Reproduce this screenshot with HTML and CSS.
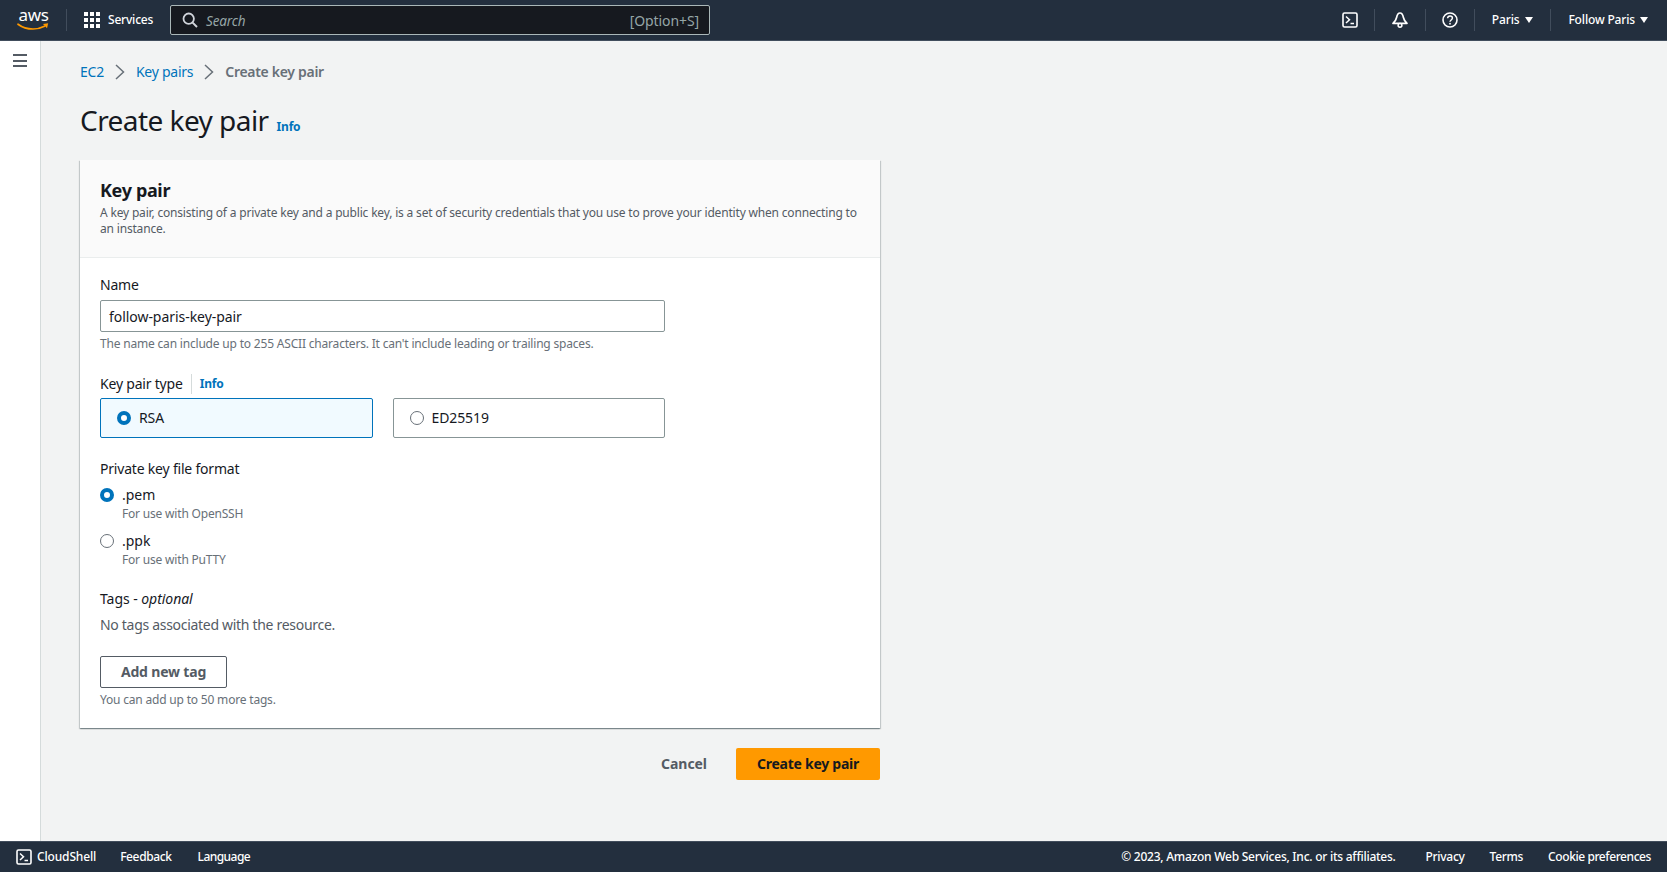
FILE: index.html
```html
<!DOCTYPE html>
<html lang="en">
<head>
<meta charset="utf-8">
<title>Create key pair</title>
<link rel="stylesheet" href="styles.css">
</head>
<body>
<header class="topbar">
  <div class="logo">
    <span class="logo-text">aws</span>
    <svg class="swoosh" width="33" height="9" viewBox="0 0 33 9"><path d="M1 1.200c4 3 9 4.800 15 4.800 4 0 8-1 11.500-2.800" fill="none" stroke="#f90" stroke-width="1.700" stroke-linecap="round"/><path d="M26 .9l5.200-.6-1.200 5z" fill="#f90"/></svg>
  </div>
  <span class="sep logo-sep"></span>
  <div class="services">
    <span class="grid-icon"><i></i><i></i><i></i><i></i><i></i><i></i><i></i><i></i><i></i></span>
    <span>Services</span>
  </div>
  <div class="search">
    <svg class="search-icon" width="16" height="16" viewBox="0 0 16 16"><circle cx="6.700" cy="6.700" r="5.200" fill="none" stroke="#d1d5db" stroke-width="1.800"/><path d="M10.600 10.600l4.400 4.400" stroke="#d1d5db" stroke-width="2" fill="none"/></svg>
    <span class="search-text">Search</span>
    <span class="search-key">[Option+S]</span>
  </div>
  <div class="top-right">
    <span class="top-icon first">
      <svg width="16" height="16" viewBox="0 0 16 16"><rect x="1" y="1" width="14" height="14" rx="1.500" fill="none" stroke="#fff" stroke-width="1.600"/><path d="M4 4.500L7.500 7.700 4 11M8.500 11.500H12" fill="none" stroke="#fff" stroke-width="1.500"/></svg>
    </span>
    <span class="sep"></span>
    <span class="top-icon second">
      <svg width="16" height="16" viewBox="0 0 16 16"><path d="M8 1C5.600 1 5 3.300 4.600 5.500 4.200 7.800 2.800 9.600 1 11.300h14c-1.800-1.700-3.200-3.500-3.600-5.800C11 3.300 10.400 1 8 1z" fill="none" stroke="#fff" stroke-width="1.700" stroke-linejoin="round"/><circle cx="8" cy="13.300" r="1.900" fill="#232f3e" stroke="#fff" stroke-width="1.500"/></svg>
    </span>
    <span class="sep"></span>
    <span class="top-icon third">
      <svg width="16" height="16" viewBox="0 0 16 16"><circle cx="8" cy="8" r="7" fill="none" stroke="#fff" stroke-width="1.600"/><path d="M5.600 6.200C5.700 4.800 6.700 4 8 4c1.400 0 2.400.9 2.400 2.100 0 1.900-2.400 1.900-2.400 3.700" fill="none" stroke="#fff" stroke-width="1.500"/><rect x="7.200" y="10.900" width="1.600" height="1.600" fill="#fff"/></svg>
    </span>
    <span class="sep"></span>
    <span class="menu region">Paris<i class="caret"></i></span>
    <span class="sep"></span>
    <span class="menu account">Follow Paris<i class="caret"></i></span>
  </div>
</header>

<div class="shell">
  <aside class="side">
    <span class="burger"><i></i><i></i><i></i></span>
  </aside>
  <main class="content">
    <nav class="crumbs">
      <a>EC2</a>
      <svg width="16" height="16" viewBox="0 0 16 16"><path d="M4 1l7.500 7L4 15" fill="none" stroke="#687078" stroke-width="1.500"/></svg>
      <a>Key pairs</a>
      <svg width="16" height="16" viewBox="0 0 16 16"><path d="M4 1l7.500 7L4 15" fill="none" stroke="#687078" stroke-width="1.500"/></svg>
      <span class="crumb-current">Create key pair</span>
    </nav>
    <div class="page-title">
      <h1>Create key pair</h1>
      <a class="info">Info</a>
    </div>
    <section class="card">
      <div class="card-head">
        <h2>Key pair</h2>
        <p>A key pair, consisting of a private key and a public key, is a set of security credentials that you use to prove your identity when connecting to an instance.</p>
      </div>
      <div class="card-body">
        <div class="label">Name</div>
        <div class="input">follow-paris-key-pair</div>
        <div class="hint hint-name">The name can include up to 255 ASCII characters. It can't include leading or trailing spaces.</div>

        <div class="label label-type"><span>Key pair type</span><a class="info info-inline">Info</a></div>
        <div class="tiles">
          <div class="tile tile-on"><span class="radio radio-on"></span>RSA</div>
          <div class="tile"><span class="radio"></span>ED25519</div>
        </div>

        <div class="label label-format">Private key file format</div>
        <div class="option">
          <span class="radio radio-on"></span>
          <div><div class="opt-title">.pem</div><div class="hint">For use with OpenSSH</div></div>
        </div>
        <div class="option option-next">
          <span class="radio"></span>
          <div><div class="opt-title">.ppk</div><div class="hint">For use with PuTTY</div></div>
        </div>

        <div class="label label-tags">Tags - <em>optional</em></div>
        <div class="no-tags">No tags associated with the resource.</div>
        <div class="btn-add">Add new tag</div>
        <div class="hint hint-tags">You can add up to 50 more tags.</div>
      </div>
    </section>
    <div class="actions">
      <span class="cancel">Cancel</span>
      <span class="primary">Create key pair</span>
    </div>
  </main>
</div>

<footer class="footer">
  <span class="foot-item cloudshell">
    <svg width="16" height="16" viewBox="0 0 16 16"><rect x="1" y="1" width="14" height="14" rx="1.500" fill="none" stroke="#fff" stroke-width="1.600"/><path d="M4 4.500L7.500 7.700 4 11M8.500 11.500H12" fill="none" stroke="#fff" stroke-width="1.500"/></svg>
    CloudShell
  </span>
  <span class="foot-item foot-tight">Feedback</span>
  <span class="foot-item foot-lang">Language</span>
  <span class="foot-right">
    <span class="foot-item foot-copy">© 2023, Amazon Web Services, Inc. or its affiliates.</span>
    <span class="foot-item">Privacy</span>
    <span class="foot-item">Terms</span>
    <span class="foot-item foot-cookie">Cookie preferences</span>
  </span>
</footer>
</body>
</html>
```

FILE: styles.css
```css
* { box-sizing: border-box; }
html, body { height: 100%; }
body {
  margin: 0;
  height: 872px;
  overflow: hidden;
  display: flex;
  flex-direction: column;
  background: #f2f3f3;
  color: #16191f;
  font-family: "Noto Sans", "Liberation Sans", sans-serif;
  font-size: 14px;
  line-height: 20px;
}
a { color: #0073bb; }

/* top bar */
.topbar {
  height: 41px;
  flex: none;
  display: flex;
  align-items: center;
  background: #232f3e;
  border-bottom: 1px solid #414d5c;
  color: #fff;
  font-size: 12px;
  font-weight: 500;
  padding-left: 17px;
}
.logo { width: 33px; display: flex; flex-direction: column; align-items: center; }
.logo-text { font-size: 17px; line-height: 14px; font-weight: 400; letter-spacing: -0.4px; }
.swoosh { display: block; margin-top: 1px; }
.sep { width: 1px; height: 22px; background: #414d5c; flex: none; }
.logo-sep { margin-left: 16px; margin-right: 17px; }
.services { display: flex; align-items: center; gap: 8px; width: 87px; letter-spacing: -0.2px; }
.grid-icon { display: grid; grid-template-columns: repeat(3, 4px); gap: 2px; width: 16px; }
.grid-icon i { width: 4px; height: 4px; background: #fff; }
.search {
  width: 540px;
  height: 30px;
  margin-left: -1px;
  display: flex;
  align-items: center;
  background: #16191f;
  border: 1px solid #aab7b8;
  border-radius: 2px;
  padding: 0 10px 0 11px;
  font-size: 14px;
  font-weight: 400;
  color: #95a5a6;
}
.search-icon { flex: none; }
.search-text { font-style: italic; margin: 1px 0 0 8px; font-size: 13.500px; letter-spacing: -0.15px; }
.search-key { margin: 1px 0 0 auto; letter-spacing: -0.1px; }
.top-right { margin-left: auto; display: flex; align-items: center; }
.top-icon { height: 22px; display: flex; align-items: center; justify-content: center; }
.top-icon.first { width: 48px; }
.top-icon.second { width: 50px; }
.top-icon.third { width: 48px; }
.menu { display: flex; align-items: center; gap: 6px; letter-spacing: -0.15px; }
.region { padding: 0 17px 0 17px; }
.account { padding: 0 19px 0 17px; gap: 5px; }
.caret { width: 0; height: 0; border-left: 4.500px solid transparent; border-right: 4.500px solid transparent; border-top: 6px solid #fff; }

/* shell */
.shell { flex: 1; display: flex; min-height: 0; }
.side {
  width: 41px;
  flex: none;
  background: #fff;
  border-right: 1px solid #d5dbdb;
  padding: 13px 0 0 13px;
}
.burger { display: flex; flex-direction: column; gap: 3.500px; width: 14px; }
.burger i { height: 2px; background: #545b64; }
.content { flex: 1; padding: 21px 0 0 39px; min-width: 0; }

.crumbs { display: flex; align-items: center; height: 20px; font-size: 14px; letter-spacing: -0.25px; }
.crumbs svg { margin: 0 8px 0 8px; flex: none; }
.crumb-current { color: #687078; font-weight: 600; letter-spacing: -0.3px; }
.page-title { display: flex; align-items: baseline; margin: 20px 0 0; height: 42px; }
h1 { margin: 0; font-size: 28px; line-height: 36px; font-weight: 400; letter-spacing: -0.55px; }
.info { font-size: 12px; font-weight: 700; margin-left: 8px; letter-spacing: -0.2px; }

/* card */
.card {
  width: 800px;
  margin-top: 16px;
  background: #fff;
  box-shadow: 0 1px 1px 0 rgba(0,28,36,.3), 1px 1px 1px 0 rgba(0,28,36,.15), -1px 1px 1px 0 rgba(0,28,36,.15);
}
.card-head {
  height: 98px;
  padding: 19px 20px 0;
  background: #fafafa;
  border-bottom: 1px solid #eaeded;
}
h2 { margin: 0; font-size: 18px; line-height: 22px; font-weight: 700; letter-spacing: -0.35px; }
.card-head p { margin: 4px 0 0; font-size: 12px; line-height: 16px; color: #545b64; letter-spacing: -0.18px; }
.card-body { padding: 17px 20px 20px; height: 470px; }
.label { font-size: 14px; line-height: 20px; letter-spacing: -0.2px; }
.input {
  width: 565px;
  height: 32px;
  margin-top: 5px;
  padding: 1px 8px 0;
  display: flex;
  align-items: center;
  border: 1px solid #879596;
  border-radius: 2px;
  letter-spacing: -0.05px;
}
.hint { font-size: 12px; line-height: 16px; color: #687078; letter-spacing: -0.19px; }
.hint-name { margin-top: 4px; }
.label-type { display: flex; align-items: center; margin-top: 22px; }
.info-inline { margin-left: 8px; padding-left: 8px; border-left: 1px solid #d5dbdb; line-height: 20px; }
.tiles { display: flex; gap: 20px; margin-top: 4px; width: 565px; }
.tile {
  flex: 1;
  height: 40px;
  display: flex;
  align-items: center;
  gap: 8px;
  padding-left: 16px;
  border: 1px solid #879596;
  border-radius: 2px;
  letter-spacing: -0.1px;
}
.tile-on { background: #f1faff; border-color: #0073bb; }
.radio {
  width: 14px;
  height: 14px;
  flex: none;
  border: 1px solid #687078;
  border-radius: 50%;
  background: #fff;
}
.radio-on { border: 4px solid #0073bb; }
.label-format { margin-top: 21px; }
.option { display: flex; gap: 8px; margin-top: 6px; }
.option .radio { margin-top: 3px; }
.option-next { margin-top: 9px; }
.opt-title { line-height: 20px; }
.option .hint { margin-top: 1px; }
.label-tags { margin-top: 21px; letter-spacing: -0.05px; }
.no-tags { margin-top: 6px; color: #545b64; letter-spacing: -0.3px; }
.btn-add {
  width: 127px;
  height: 32px;
  margin-top: 21px;
  display: flex;
  align-items: center;
  justify-content: center;
  border: 1px solid #545b64;
  border-radius: 2px;
  color: #545b64;
  font-weight: 700;
  letter-spacing: -0.18px;
}
.hint-tags { margin-top: 4px; }

/* actions */
.actions { width: 800px; display: flex; justify-content: flex-end; align-items: center; margin-top: 20px; font-weight: 700; }
.cancel { color: #545b64; margin-right: 29px; letter-spacing: -0.05px; }
.primary { width: 144px; height: 32px; display: flex; align-items: center; justify-content: center; background: #ff9900; border-radius: 2px; color: #16191f; letter-spacing: -0.25px; }

/* footer */
.footer {
  height: 31px;
  flex: none;
  display: flex;
  align-items: center;
  padding: 0 16px;
  background: #232f3e;
  border-top: 1px solid #414d5c;
  color: #fff;
  font-size: 12px;
  font-weight: 500;
  letter-spacing: -0.15px;
}
.foot-item { margin-right: 24px; }
.foot-tight { letter-spacing: -0.38px; margin-right: 26px; }
.foot-lang { letter-spacing: -0.55px; }
.cloudshell { display: flex; align-items: center; gap: 5px; }
.foot-right { margin-left: auto; display: flex; letter-spacing: -0.3px; }
.foot-right .foot-item { margin-right: 25px; }
.foot-right .foot-copy { letter-spacing: -0.25px; margin-right: 30px; }
.foot-right .foot-cookie { letter-spacing: -0.42px; margin-right: 0; }
```
